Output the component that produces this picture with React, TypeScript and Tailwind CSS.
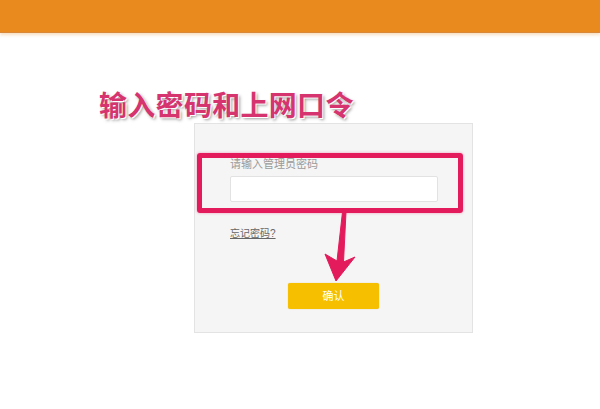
export default function App() {
  return (
    <div className="relative w-[600px] h-[409px] bg-white overflow-hidden font-['Liberation_Sans','Noto_Sans_CJK_SC',sans-serif]">
      {/* top bar */}
      <div className="h-[33px] bg-[#e98a1e] border-b border-[#d9883a] shadow-[0_2px_3px_rgba(240,200,150,0.6)]" />

      {/* title */}
      <div className="pl-[99px] pt-[58px] h-[90px]">
        <h1 className="text-[28px] leading-[32px] font-bold text-[#d6346f] tracking-[0.3px] [text-shadow:1px_1px_0_#fff,2px_2px_3px_rgba(120,120,120,0.7)]">
          输入密码和上网口令
        </h1>
      </div>

      {/* card */}
      <div className="ml-[194px] w-[279px] h-[210px] bg-[#f5f5f5] border border-[#e3e3e3] flex flex-col">
        <div className="pl-[35px] pt-[33px]">
          <p className="text-[11px] leading-[14px] text-[#9a9a9a]">请输入管理员密码</p>
          <div className="mt-[5px] w-[208px] h-[26px] bg-white border border-[#e2e2e2] rounded-[2px]" />
        </div>
        <div className="pl-[35px] pt-[26px]">
          <a className="block text-[10px] leading-[12px] text-[#666] underline">忘记密码?</a>
        </div>
        <div className="pl-[93px] pt-[43px]">
          <button className="block w-[91px] h-[26px] bg-[#f6c000] rounded-[2px] text-white text-[11px] shadow-[0_0_1px_rgba(200,150,0,0.6)]">
            确认
          </button>
        </div>
      </div>

      {/* annotation: red frame */}
      <div className="absolute left-[197px] top-[153px] w-[266px] h-[60px] border-[5px] border-[#e31a5c] rounded-[3px] shadow-[0_0_3px_rgba(227,26,92,0.4)]" />

      {/* annotation: arrow */}
      <svg className="absolute left-[320px] top-[210px]" width="40" height="75" viewBox="0 0 40 75">
        <path
          d="M22.5 2 L26 2 L23.5 52 L35 47 L16 71 L5 44 L17 51 Z"
          fill="#e31a5c"
          stroke="#e31a5c"
          strokeLinejoin="round"
          strokeWidth="1"
        />
      </svg>
    </div>
  );
}
